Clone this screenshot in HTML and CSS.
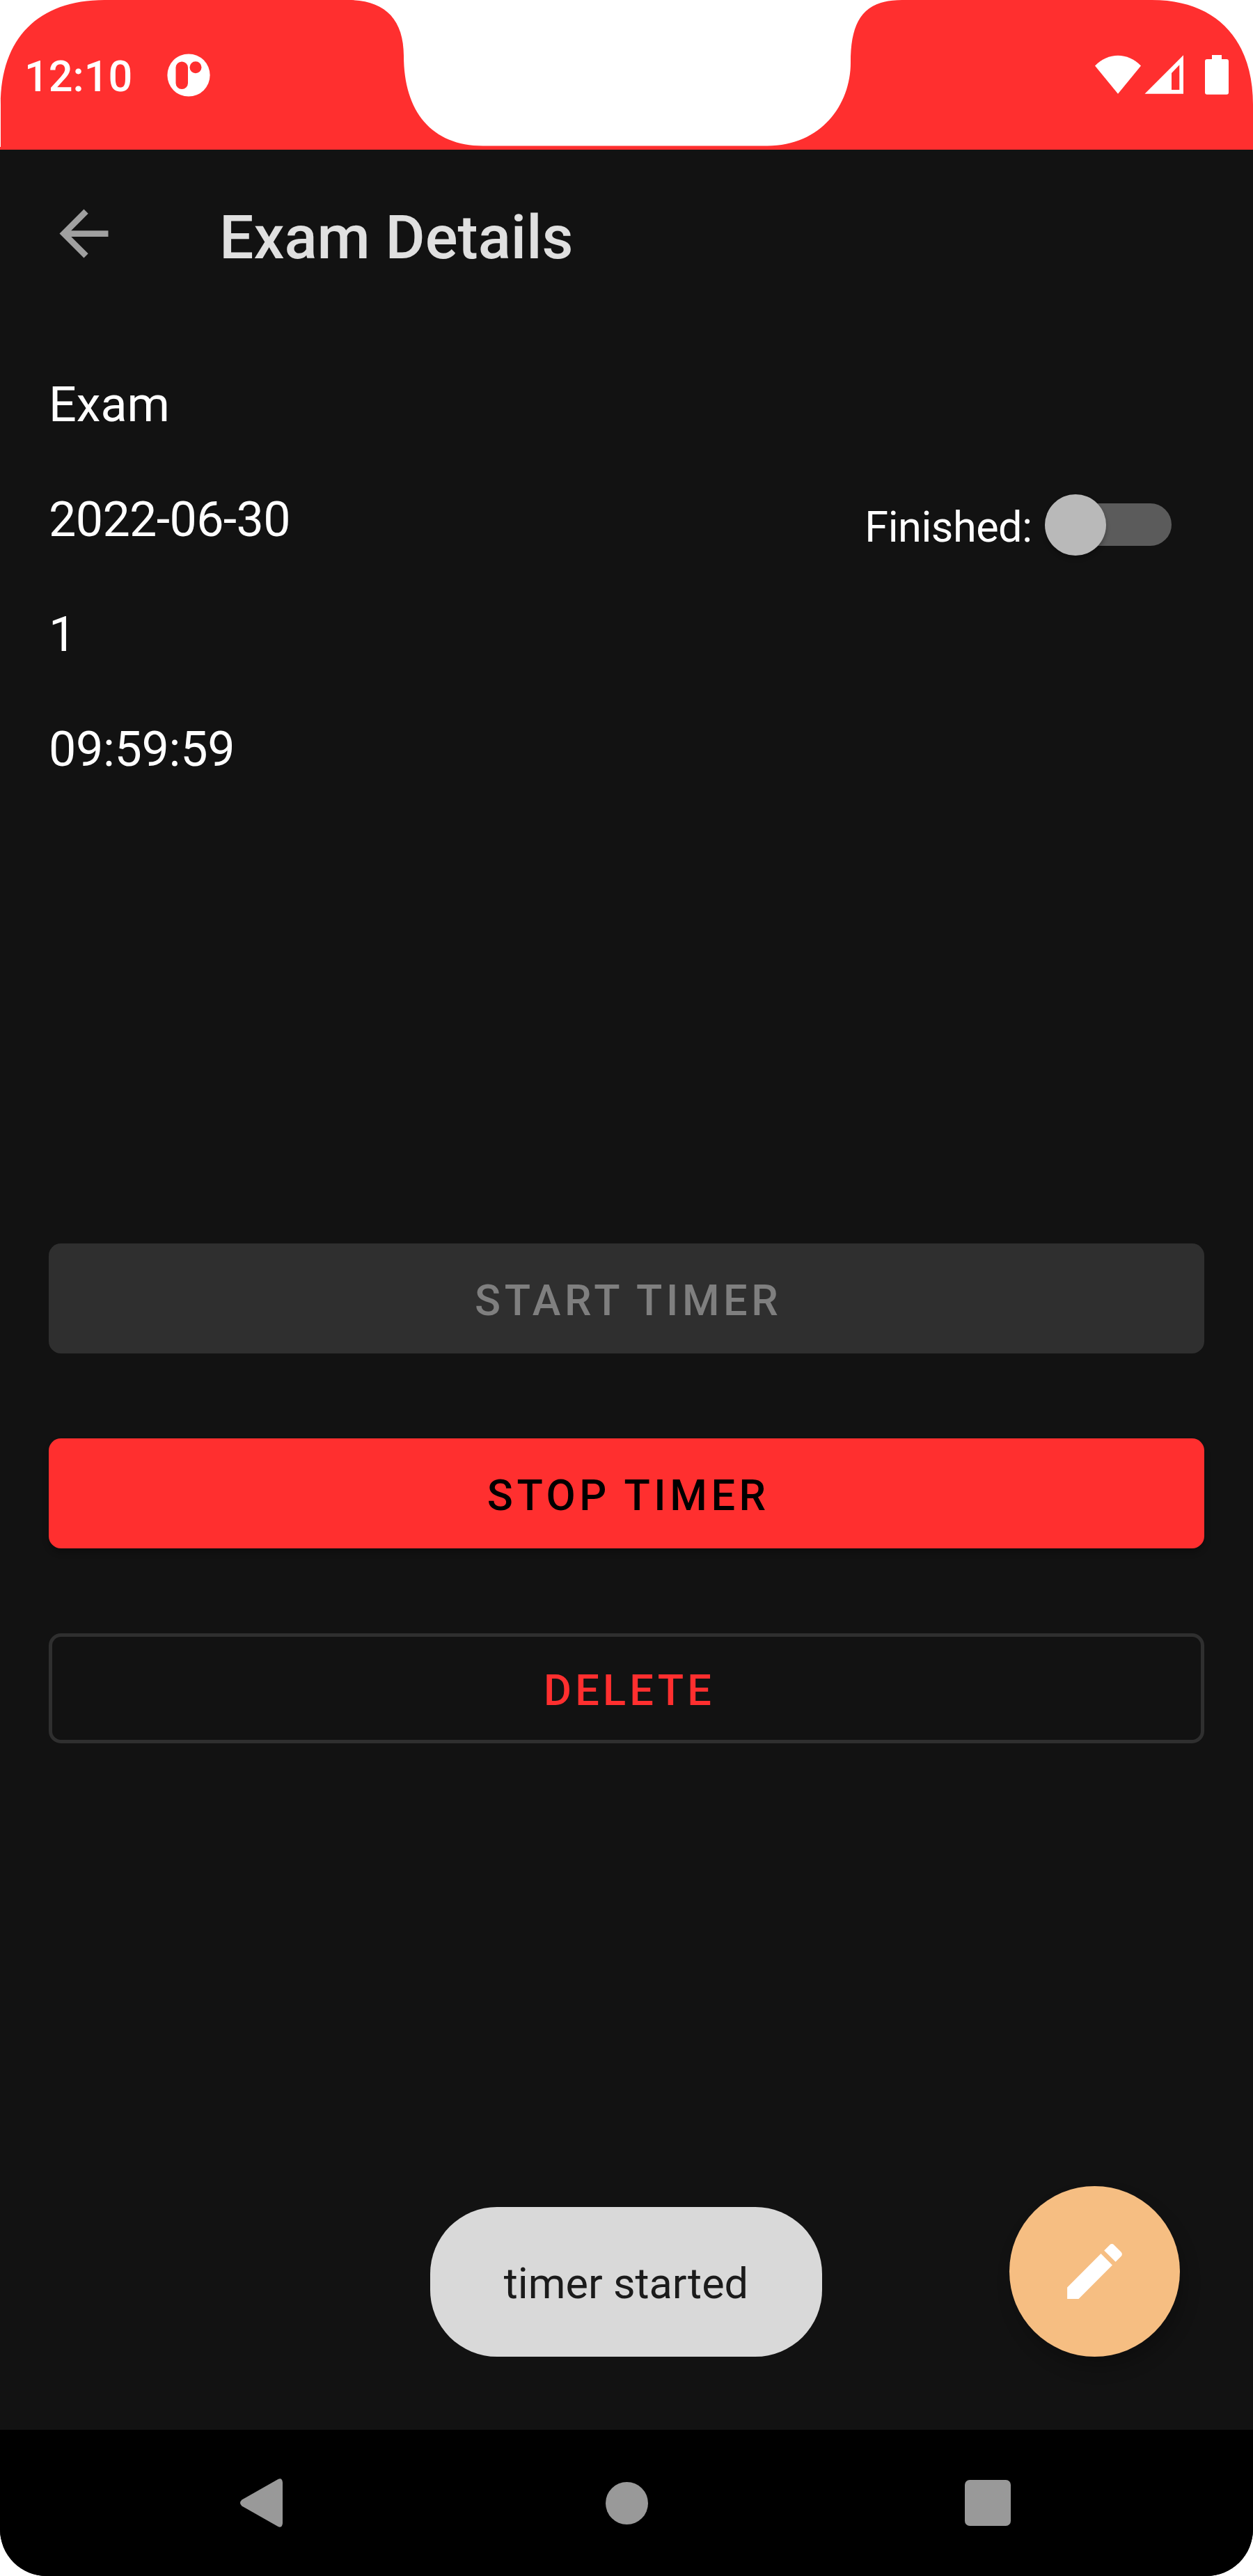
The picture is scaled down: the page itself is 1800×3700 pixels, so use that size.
FILE: index.html
```html
<!DOCTYPE html>
<html lang="en">
<head>
<meta charset="utf-8">
<title>Exam Details</title>
<link rel="stylesheet" href="styles.css">
</head>
<body>
<div class="screen">
  <header class="status-bar">
    <svg class="cutout" viewBox="0 0 1800 215" aria-hidden="true">
      <path d="M0 0H150C55 0 1 55 1 150V211H0Z"/>
      <path d="M501 0C552 0 580 27 580 80C580 160 620 209.5 694 209.5H1102C1180 209.5 1222 150 1222 90C1222 30 1240 0 1296 0Z"/>
      <path d="M1655 0C1750 0 1800 60 1800 150V0Z"/>
    </svg>
    <span class="clock">12:10</span>
    <svg class="app-icon" viewBox="0 0 62 62" aria-hidden="true">
      <circle cx="31" cy="31" r="30.6" fill="#fff"/>
      <rect x="12.5" y="11.5" width="17.5" height="39.5" rx="8.7" fill="#ff2f2f"/>
      <circle cx="41" cy="19.7" r="8.5" fill="#ff2f2f"/>
    </svg>
    <svg class="status-icons" viewBox="0 0 194 58" aria-hidden="true">
      <path d="M0 15.5C19 -4.2 47 -4.2 66 15.5L33 55.7Z"/>
      <path fill-rule="evenodd" d="M71.5 55.7L127 .3V55.7ZM110 26V50H121.3V14.3Z"/>
      <path d="M168 0H182V6H189Q192 6 192 9V53.5Q192 56.7 189 56.7H161Q158 56.7 158 53.5V9Q158 6 161 6H168Z"/>
    </svg>
  </header>

  <div class="app-bar">
    <svg class="back" viewBox="0 0 24 24" aria-label="Back"><path d="M20 11H7.83l5.59-5.59L12 4l-8 8 8 8 1.41-1.41L7.83 13H20z"/></svg>
    <h1 class="title">Exam Details</h1>
  </div>

  <main class="content">
    <section class="details">
      <div class="fields">
        <p class="field">Exam</p>
        <p class="field field-date">2022-06-30</p>
        <p class="field">1</p>
        <p class="field field-time">09:59:59</p>
      </div>
      <label class="finished">
        <span class="finished-label">Finished:</span>
        <span class="switch"><span class="thumb"></span></span>
      </label>
    </section>
    <section class="actions">
      <button class="btn btn-disabled" disabled>START TIMER</button>
      <button class="btn btn-primary">STOP TIMER</button>
      <button class="btn btn-outline">DELETE</button>
    </section>
  </main>

  <div class="toast">timer started</div>
  <div class="fab">
    <svg viewBox="0 0 24 24" aria-label="Edit"><path d="M3 17.25V21h3.75L17.81 9.94l-3.75-3.75L3 17.25zM20.71 7.04c.39-.39.39-1.02 0-1.41l-2.34-2.34c-.39-.39-1.02-.39-1.41 0l-1.83 1.83 3.75 3.75 1.83-1.83z"/></svg>
  </div>

  <nav class="nav-bar">
    <svg class="nav-back" viewBox="0 0 61 70" aria-label="Back"><path d="M54 1.2Q60.5 -2 61 6V64Q60.5 72 54 68.8L2.5 39.5Q-2.5 35 2.5 30.5Z"/></svg>
    <span class="nav-home"></span>
    <span class="nav-recent"></span>
  </nav>
</div>
</body>
</html>
```
FILE: styles.css
```css
* { box-sizing: border-box; }

body {
  margin: 0;
  background: #fff;
  font-family: Roboto, sans-serif;
}

.screen {
  position: relative;
  display: flex;
  flex-direction: column;
  width: 1800px;
  height: 3700px;
  overflow: hidden;
  background: #121212;
  border-radius: 0 0 67px 67px;
}

.status-bar {
  position: relative;
  display: flex;
  align-items: flex-start;
  height: 215px;
  padding: 74px 33px 0 35px;
  background: #ff2f2f;
}

.cutout {
  position: absolute;
  inset: 0;
  width: 1800px;
  height: 215px;
  fill: #fff;
}

.clock {
  width: 204.5px;
  font-size: 61.25px;
  font-weight: 500;
  line-height: 72px;
  color: #fff;
}

.app-icon {
  width: 62px;
  height: 62px;
  margin-top: 3px;
}

.status-icons {
  width: 194px;
  height: 58px;
  margin: 5px 0 0 auto;
  fill: #fff;
}

.app-bar {
  display: flex;
  align-items: flex-start;
  height: 245px;
  padding: 68px 67.5px 0;
}

.back {
  width: 105px;
  height: 105px;
  fill: #a0a0a0;
}

.title {
  margin: 7px 0 0 142.5px;
  font-size: 87.5px;
  font-weight: 500;
  line-height: 103px;
  color: #e0e0e0;
}

.content {
  display: flex;
  flex: 1;
  flex-direction: column;
  padding: 80px 70px 0;
}

.details {
  display: flex;
  justify-content: space-between;
  height: 1246px;
  color: #fff;
}

.fields {
  display: flex;
  flex-direction: column;
  gap: 83px;
}

.field {
  margin: 0;
  font-size: 70px;
  line-height: 82px;
}

.field-date { letter-spacing: -.65px; }

.field-time { letter-spacing: -.35px; }

.finished {
  display: flex;
  align-items: flex-start;
  gap: 25.5px;
  margin: 181px 47px 0 0;
  font-size: 61.25px;
  line-height: 72px;
}

.finished-label { letter-spacing: -.5px; }

.switch {
  display: flex;
  align-items: center;
  width: 175px;
  height: 61px;
  margin-top: 2px;
  border-radius: 31px;
  background: #5b5b5b;
}

.thumb {
  width: 88px;
  height: 88px;
  margin-left: -7px;
  border-radius: 50%;
  background: #b9b9b9;
  box-shadow: 0 4px 6px rgba(0, 0, 0, .3);
}

.actions {
  display: flex;
  flex-direction: column;
  gap: 122px;
}

.btn {
  height: 158px;
  padding: 6px 0 0 5.5px;
  border: 0;
  border-radius: 17.5px;
  font: 500 61.25px/72px Roboto, sans-serif;
  letter-spacing: 5.6px;
  text-align: center;
}

.btn-disabled {
  background: #2f2f2f;
  color: #7f7f7f;
}

.btn-primary {
  background: #ff2f2f;
  color: #000;
  box-shadow: 0 6px 8px rgba(0, 0, 0, .25);
}

.btn-outline {
  padding-left: 8px;
  border: 5px solid #2f2f2f;
  background: transparent;
  color: #ff2f2f;
  letter-spacing: 5.2px;
}

.toast {
  position: absolute;
  left: 618px;
  top: 3170px;
  width: 563px;
  height: 215px;
  padding-top: 74px;
  border-radius: 96px;
  background: #d9d9d9;
  color: #1b1b1b;
  font-size: 61.25px;
  line-height: 72px;
  text-align: center;
}

.fab {
  position: absolute;
  left: 1450px;
  top: 3140px;
  display: grid;
  place-items: center;
  width: 245px;
  height: 245px;
  border-radius: 50%;
  background: #f6be82;
  box-shadow: 6px 16px 24px rgba(0, 0, 0, .22);
}

.fab svg {
  width: 105px;
  height: 105px;
  fill: #fff;
}

.nav-bar {
  display: flex;
  align-items: center;
  justify-content: space-between;
  height: 210px;
  padding: 0 348.5px 0 345px;
  background: #000;
}

.nav-back {
  width: 61px;
  height: 70px;
  fill: #999;
}

.nav-home {
  width: 61px;
  height: 61px;
  margin-left: 9px;
  border-radius: 50%;
  background: #999;
}

.nav-recent {
  width: 66px;
  height: 66px;
  border-radius: 7px;
  background: #999;
}
```
